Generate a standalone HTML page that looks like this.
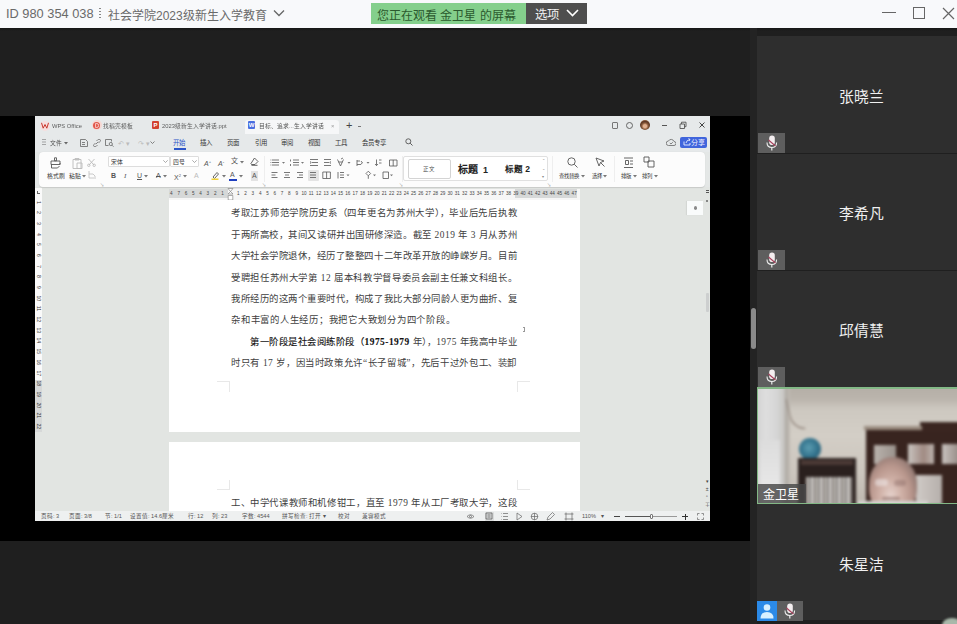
<!DOCTYPE html>
<html lang="zh-CN"><head><meta charset="utf-8">
<style>
*{margin:0;padding:0;box-sizing:border-box}
html,body{width:957px;height:624px;overflow:hidden;background:#1f1f1f;font-family:"Liberation Sans",sans-serif}
.a{position:absolute}
#title{left:0;top:0;width:957px;height:28px;background:#f8f9fb}
.tt{color:#6a6a6a;font-size:13px;white-space:nowrap}
#share{left:0;top:116px;width:750px;height:425px;background:#000}
#gap{left:750px;top:28px;width:7px;height:596px;background:#232323}
.tile{left:757px;width:200px;background:#2e2e2e}
.name{color:#f0f0f0;font-size:14.8px;white-space:nowrap}
.mic{left:758px;width:27px;height:20px;background:#5e5e5e}
.mic svg{position:absolute;left:0;top:0}
#wps{left:35px;top:116px;width:675px;height:405px;background:#e4e7e6;overflow:hidden}
.w7{font-size:5.8px;white-space:nowrap;line-height:10px;opacity:0.85}
.w75{font-size:6.4px;white-space:nowrap;line-height:10px;color:#333}
.w6{font-size:5.8px;white-space:nowrap;line-height:10px;color:#333}
.ic{font-size:7px;line-height:10px;color:#555;white-space:nowrap}
.sb{top:511px;font-size:5.6px;line-height:10px;color:#555;white-space:nowrap}
.doc{font-family:"Liberation Serif",serif;color:#404040;font-size:9.4px;letter-spacing:0.5px;line-height:14px;white-space:nowrap;text-align:justify}
</style></head><body>
<!-- title bar -->
<div id="title" class="a">
  <div class="a tt" style="left:6px;top:6px;font-size:12.8px">ID 980 354 038</div>
  <div class="a" style="left:99px;top:8px;width:1.5px;height:12px;background:repeating-linear-gradient(180deg,#888 0 1.5px,transparent 1.5px 3px)"></div>
  <div class="a tt" style="left:108px;top:6px;font-size:12px">社会学院2023级新生入学教育</div>
  <svg class="a" style="left:273px;top:9px" width="12" height="8" viewBox="0 0 12 8"><path d="M1 1.5 L6 6.5 L11 1.5" fill="none" stroke="#666" stroke-width="1.3"/></svg>
  <div class="a" style="left:371px;top:3px;width:155px;height:21px;background:#84cf8c"></div>
  <div class="a" style="left:377px;top:6px;color:#2b5a2e;font-size:12px;white-space:nowrap">您正在观看 金卫星 的屏幕</div>
  <div class="a" style="left:526px;top:3px;width:61px;height:21px;background:#4e4e4e"></div>
  <div class="a" style="left:535px;top:5px;color:#f0f0f0;font-size:12.4px">选项</div>
  <svg class="a" style="left:566px;top:9px" width="13" height="8" viewBox="0 0 13 8"><path d="M1 1 L6.5 6.5 L12 1" fill="none" stroke="#fff" stroke-width="1.6"/></svg>
  <div class="a" style="left:882px;top:12px;width:14px;height:1.3px;background:#666"></div>
  <div class="a" style="left:913px;top:7px;width:12px;height:12px;border:1.2px solid #666"></div>
  <svg class="a" style="left:942px;top:7px" width="13" height="13" viewBox="0 0 13 13"><path d="M1 1 L12 12 M12 1 L1 12" stroke="#666" stroke-width="1.2"/></svg>
</div>

<div class="a" style="left:0;top:28px;width:957px;height:3px;background:linear-gradient(#161616,#1f1f1f)"></div>
<div id="share" class="a"></div>
<div id="gap" class="a"></div>
<div class="a" style="left:751px;top:308px;width:5px;height:41px;background:#8a8a8a;border-radius:2.5px"></div>

<!-- participants -->
<div class="a tile" style="top:36px;height:117px"></div>
<div class="a tile" style="top:154px;height:116px"></div>
<div class="a tile" style="top:271px;height:116px"></div>
<div class="a tile" style="top:504px;height:116px"></div>
<div class="a name" style="left:839px;top:84.5px">张晓兰</div>
<div class="a name" style="left:839px;top:201.5px">李希凡</div>
<div class="a name" style="left:839px;top:319px">邱倩慧</div>
<div class="a name" style="left:839px;top:553px">朱星洁</div>
<div class="a mic" style="top:133px"><svg width="27" height="20" viewBox="0 0 27 20"><rect x="11.2" y="2.5" width="5.6" height="9.5" rx="2.8" fill="#f4eef0"/><path d="M9 9.5 q0 5 4.8 5 q4.8 0 4.8 -5" fill="none" stroke="#eee" stroke-width="1.1"/><path d="M13.8 14.5 v3" stroke="#eee" stroke-width="1.2"/><path d="M10.5 7 L17.5 13" stroke="#a8405c" stroke-width="1.1"/></svg></div>
<div class="a mic" style="top:250px"><svg width="27" height="20" viewBox="0 0 27 20"><rect x="11.2" y="2.5" width="5.6" height="9.5" rx="2.8" fill="#f4eef0"/><path d="M9 9.5 q0 5 4.8 5 q4.8 0 4.8 -5" fill="none" stroke="#eee" stroke-width="1.1"/><path d="M13.8 14.5 v3" stroke="#eee" stroke-width="1.2"/><path d="M10.5 7 L17.5 13" stroke="#a8405c" stroke-width="1.1"/></svg></div>
<div class="a mic" style="top:367px"><svg width="27" height="20" viewBox="0 0 27 20"><rect x="11.2" y="2.5" width="5.6" height="9.5" rx="2.8" fill="#f4eef0"/><path d="M9 9.5 q0 5 4.8 5 q4.8 0 4.8 -5" fill="none" stroke="#eee" stroke-width="1.1"/><path d="M13.8 14.5 v3" stroke="#eee" stroke-width="1.2"/><path d="M10.5 7 L17.5 13" stroke="#a8405c" stroke-width="1.1"/></svg></div>
<div class="a" style="left:757px;top:601px;width:20px;height:20px;background:#2b8ae8"><svg width="20" height="20" viewBox="0 0 20 20" style="position:absolute;left:0;top:0"><circle cx="10" cy="6.5" r="3.3" fill="#d8f0ff"/><path d="M3.5 17.5 q0 -6.5 6.5 -6.5 q6.5 0 6.5 6.5z" fill="#d8f0ff"/></svg></div>
<div class="a mic" style="left:777px;top:601px;width:26px"><svg width="26" height="20" viewBox="0 0 26 20"><rect x="10.2" y="2.5" width="5.6" height="9.5" rx="2.8" fill="#f4eef0"/><path d="M8 9.5 q0 5 4.8 5 q4.8 0 4.8 -5" fill="none" stroke="#eee" stroke-width="1.1"/><path d="M12.8 14.5 v3" stroke="#eee" stroke-width="1.2"/><path d="M9.5 7 L16.5 13" stroke="#a8405c" stroke-width="1.1"/></svg></div>

<!-- video tile -->
<div class="a" style="left:757px;top:387px;width:200px;height:117px;background:#83b886"></div>
<div class="a" style="left:758px;top:388.5px;width:199px;height:114.5px;overflow:hidden;background:#c9c3bb">
 <div class="a" style="left:-4px;top:-4px;width:207px;height:123px;filter:blur(1.8px)">
  <div class="a" style="left:0;top:0;width:207px;height:123px;background:linear-gradient(180deg,#b4aea6 0,#bab4ac 14px,#cdc8c0 24px,#d3cec6 50px,#cbc5bd 90px,#bcb5ad 123px)"></div>
  <div class="a" style="left:0;top:0;width:32px;height:123px;background:linear-gradient(90deg,#cdcdcd,#dedede 35%,#d6d6d6 70%,#c4c2be)"></div>
  <div class="a" style="left:6px;top:55px;width:20px;height:68px;background:linear-gradient(180deg,#dcdcdc,#ececec)"></div>
  <div class="a" style="left:31px;top:0;width:5px;height:123px;background:linear-gradient(90deg,#aaa59f,#c2bdb6)"></div>
  <div class="a" style="left:35px;top:14px;width:13px;height:30px;border-left:1.6px solid #7d6e64;border-bottom:1.6px solid #7d6e64;border-radius:0 0 0 12px;transform:skewX(14deg)"></div>
  <div class="a" style="left:45px;top:53px;width:22px;height:22px;border-radius:50%;background:radial-gradient(circle at 45% 45%,#5b9cb0,#30708a 55%,#274c5c)"></div>
  <div class="a" style="left:44px;top:73px;width:58px;height:50px;background:#2a201e"></div>
  <div class="a" style="left:47px;top:75px;width:52px;height:5px;background:#4b3a36"></div>
  <div class="a" style="left:52px;top:92px;width:46px;height:31px;background:repeating-linear-gradient(90deg,#b8b3ae 0 3px,#86827f 3px 5px,#cfcbc7 5px 8px,#55504d 8px 9px)"></div>
  <div class="a" style="left:112px;top:43px;width:95px;height:80px;background:#38241f"></div>
  <div class="a" style="left:166px;top:37px;width:41px;height:10px;background:#3a2520"></div>
  <div class="a" style="left:110px;top:41px;width:58px;height:4px;background:#9a8c80"></div>
  <div class="a" style="left:120px;top:60px;width:22px;height:19px;background:linear-gradient(90deg,#b9b2ac,#9a928c)"></div>
  <div class="a" style="left:154px;top:59px;width:26px;height:20px;background:linear-gradient(90deg,#c9c4c0,#a08a82 60%,#bdb4af)"></div>
  <div class="a" style="left:188px;top:59px;width:19px;height:20px;background:linear-gradient(90deg,#c9c3bf,#908580)"></div>
  <div class="a" style="left:162px;top:90px;width:26px;height:30px;background:linear-gradient(90deg,#cfcac6,#b5afab)"></div>
  <div class="a" style="left:115px;top:72px;width:48px;height:56px;border-radius:48% 48% 42% 42%;background:radial-gradient(ellipse at 45% 70%,#e6d2cc 0,#cfb0a6 30%,#b8968c 55%,#8e7670 78%,#6a5a56 100%)"></div><div class="a" style="left:121px;top:94px;width:13px;height:7px;background:rgba(240,235,235,0.55);border-radius:3px"></div><div class="a" style="left:140px;top:95px;width:12px;height:6px;background:rgba(120,90,85,0.35);border-radius:3px"></div><div class="a" style="left:128px;top:112px;width:18px;height:3px;background:rgba(110,80,75,0.45);border-radius:2px"></div>
  
  <div class="a" style="left:104px;top:116px;width:70px;height:8px;background:#d6d4d2"></div>
 </div>
</div>
<div class="a" style="left:758px;top:484px;width:48px;height:19px;background:rgba(72,72,72,0.82)"></div>
<div class="a" style="left:763px;top:486.5px;color:#fff;font-size:12px;line-height:16px;white-space:nowrap">金卫星</div>

<!-- WPS window -->
<div id="wps" class="a"></div>
<!-- tab row + menu row -->
<div class="a" style="left:35px;top:116px;width:675px;height:36px;background:#e6e9ea"></div>
<div class="a" style="left:40px;top:120.5px;width:10px;height:10px;border-radius:50%;background:#f6dede"></div><svg class="a" style="left:41px;top:122px" width="8" height="7" viewBox="0 0 8 7"><path d="M0.5 0.8 L2.2 6.2 L4 2.5 L5.8 6.2 L7.5 0.8" fill="none" stroke="#c8372d" stroke-width="1"/></svg>
<div class="a w7" style="left:52px;top:121px;color:#444">WPS Office</div>
<div class="a" style="left:91.5px;top:120px;width:10px;height:10px;border-radius:50%;background:#f6d8d4"></div><div class="a" style="left:93px;top:121.5px;width:7px;height:7px;border-radius:50%;background:#e2574a"></div><svg class="a" style="left:94.5px;top:122.5px" width="4" height="5" viewBox="0 0 4 5"><path d="M0.6 0.5 h1.2 a1.8 2 0 0 1 0 4 h-1.2z" fill="none" stroke="#fbe5e2" stroke-width="0.8"/></svg>
<div class="a w7" style="left:103px;top:121px;color:#444">找稻壳模板</div>
<div class="a" style="left:152px;top:121px;width:7px;height:8px;border-radius:1px;background:#d2412f;color:#fff;font-size:6px;line-height:8px;text-align:center;font-weight:bold">P</div>
<div class="a w7" style="left:162px;top:121px;color:#444">2023级新生入学讲话.ppt</div>
<div class="a" style="left:245px;top:120px;width:94px;height:14px;background:#f6f7f8;border-radius:3px 3px 0 0"></div>
<div class="a" style="left:248px;top:121px;width:7px;height:8px;border-radius:1px;background:#4a6ee0;color:#fff;font-size:6px;line-height:8px;text-align:center;font-weight:bold">W</div>
<div class="a w7" style="left:259px;top:121px;color:#333">目标、追求...生入学讲话</div>
<div class="a w7" style="left:331px;top:121px;color:#888">×</div>
<div class="a" style="left:346px;top:119px;color:#444;font-size:11px">+</div>
<div class="a" style="left:358px;top:126px;width:2.5px;height:0.8px;background:#777"></div>
<div class="a" style="left:612px;top:122px;width:6px;height:7px;border:1px solid #777;border-radius:1px"></div>
<div class="a" style="left:626px;top:122px;width:7px;height:7px;border:1px solid #666;border-radius:50%"></div>
<div class="a" style="left:640px;top:120px;width:10px;height:10px;border-radius:50%;background:radial-gradient(circle at 50% 62%,#e0b090 0 20%,#8a5a3a 40%,#5a3524 60%,#b4784c 85%,#d8a070 100%)"></div>
<div class="a" style="left:662px;top:125px;width:5px;height:1px;background:#555"></div>
<svg class="a" style="left:679px;top:121px" width="8" height="8" viewBox="0 0 8 8" fill="none" stroke="#555" stroke-width="0.9"><path d="M1 3 h4.5 v4.5 h-4.5z M2.5 3 v-1.8 h4.5 v4.5 h-1.5"/></svg>
<svg class="a" style="left:699px;top:122px" width="6" height="6" viewBox="0 0 6 6"><path d="M0.5 0.5 L5.5 5.5 M5.5 0.5 L0.5 5.5" stroke="#444" stroke-width="1"/></svg>
<!-- menu row -->
<svg class="a" style="left:41.5px;top:139px" width="5" height="6" viewBox="0 0 5 6"><path d="M0 0.5 h4 M0 3 h4 M0 5.5 h4" stroke="#777" stroke-width="0.6"/></svg>
<div class="a w7" style="left:50px;top:138px;color:#333">文件</div>
<svg class="a" style="left:64px;top:142px" width="4" height="3" viewBox="0 0 4 3"><path d="M0 0 L4 0 L2 2.5Z" fill="#666"/></svg>
<svg class="a" style="left:79.5px;top:138.5px" width="8" height="8" viewBox="0 0 8 8" fill="none" stroke="#666" stroke-width="0.8"><path d="M0.5 0.5 h5 l2 2 v5 h-7z M2 3.5 h3 M2 5.5 h3"/></svg>
<svg class="a" style="left:92.5px;top:138.5px" width="8" height="8" viewBox="0 0 8 8" fill="none" stroke="#666" stroke-width="0.8"><path d="M3.5 2 l1.5 -1.5 a1.4 1.4 0 0 1 2 2 l-1.5 1.5 M4.5 6 l-1.5 1.5 a1.4 1.4 0 0 1 -2 -2 l1.5 -1.5 M2.8 5.2 l2.4 -2.4"/></svg>
<svg class="a" style="left:105px;top:138.5px" width="9" height="8" viewBox="0 0 9 8" fill="none" stroke="#666" stroke-width="0.8"><path d="M0.5 0.5 h6 v2 M0.5 0.5 v6 h3"/><circle cx="5.8" cy="5" r="1.6"/><path d="M7 6.2 l1.5 1.5"/></svg>
<div class="a" style="left:118px;top:140px;color:#bbb;font-size:7px">↶ ▾</div>
<div class="a" style="left:138px;top:140px;color:#bbb;font-size:7px">↷ ▾</div>
<svg class="a" style="left:150px;top:141px" width="5" height="3" viewBox="0 0 5 3"><path d="M0.5 0.5 L2.5 2.5 L4.5 0.5" fill="none" stroke="#666" stroke-width="0.8"/></svg>
<div class="a w75" style="left:173px;top:138px;color:#2c55c8">开始</div>
<div class="a" style="left:174px;top:148px;width:12px;height:1.5px;background:#2c55c8"></div>
<div class="a w75" style="left:200px;top:138px">插入</div>
<div class="a w75" style="left:227px;top:138px">页面</div>
<div class="a w75" style="left:255px;top:138px">引用</div>
<div class="a w75" style="left:281px;top:138px">审阅</div>
<div class="a w75" style="left:308px;top:138px">视图</div>
<div class="a w75" style="left:335px;top:138px">工具</div>
<div class="a w75" style="left:362px;top:138px">会员专享</div>
<svg class="a" style="left:405px;top:138px" width="8" height="8" viewBox="0 0 8 8"><circle cx="3.3" cy="3.3" r="2.5" fill="none" stroke="#555" stroke-width="0.9"/><path d="M5.2 5.2 L7.5 7.5" stroke="#555" stroke-width="1"/></svg>
<svg class="a" style="left:666px;top:138px" width="10" height="9" viewBox="0 0 10 9" fill="none" stroke="#666" stroke-width="0.8"><path d="M2.5 7.5 h5.5 a2 2 0 0 0 0 -4 a3 3 0 0 0 -5.5 -0.5 a2.2 2.2 0 0 0 0 4.5z M3.8 5 l1.2 1 l1.8 -1.8"/></svg>
<div class="a" style="left:680px;top:137px;width:27px;height:11px;background:#4065dc;border-radius:2px"></div>
<svg class="a" style="left:683px;top:138px" width="8" height="8" viewBox="0 0 8 8" fill="none" stroke="#e8eeff" stroke-width="0.9"><path d="M1 3.5 v3.5 h6 v-2 M3 5 q0.5 -3 4 -3.5 M5.5 0.5 l1.5 1 l-1 1.5"/></svg>
<div class="a" style="left:691px;top:137px;color:#eef;font-size:7px;line-height:11px">分享</div>
<!-- document area -->
<div class="a" style="left:35px;top:187px;width:675px;height:334px;background:#e2e5e2"></div>
<div class="a" style="left:35px;top:188px;width:7px;height:192px;background:#fafafa"></div><div class="a" style="left:35px;top:380px;width:7px;height:52px;background:#d6d8d8"></div>
<div class="a" style="left:35px;top:188px;width:7px;height:244px;overflow:hidden;font-size:5.2px;color:#333;line-height:10.7px;text-align:center;padding-top:8.5px;white-space:nowrap"><div style="height:10.7px;transform:rotate(90deg)">1</div><div style="height:10.7px;transform:rotate(90deg)">2</div><div style="height:10.7px;transform:rotate(90deg)">3</div><div style="height:10.7px;transform:rotate(90deg)">4</div><div style="height:10.7px;transform:rotate(90deg)">5</div><div style="height:10.7px;transform:rotate(90deg)">6</div><div style="height:10.7px;transform:rotate(90deg)">7</div><div style="height:10.7px;transform:rotate(90deg)">8</div><div style="height:10.7px;transform:rotate(90deg)">9</div><div style="height:10.7px;transform:rotate(90deg)">10</div><div style="height:10.7px;transform:rotate(90deg)">11</div><div style="height:10.7px;transform:rotate(90deg)">12</div><div style="height:10.7px;transform:rotate(90deg)">13</div><div style="height:10.7px;transform:rotate(90deg)">14</div><div style="height:10.7px;transform:rotate(90deg)">15</div><div style="height:10.7px;transform:rotate(90deg)">16</div><div style="height:10.7px;transform:rotate(90deg)">17</div><div style="height:10.7px;transform:rotate(90deg)">18</div><div style="height:10.7px;transform:rotate(90deg)">19</div><div style="height:10.7px;transform:rotate(90deg)">20</div><div style="height:10.7px;transform:rotate(90deg)">21</div><div style="height:10.7px;transform:rotate(90deg)">22</div><div style="height:10.7px;transform:rotate(90deg)">23</div></div><div class="a" style="left:37px;top:191px;width:3px;height:3px;border-left:0.7px solid #666;border-bottom:0.7px solid #666"></div>
<div class="a" style="left:169px;top:189px;width:411px;height:11px;background:#f6f6f6"></div>
<div class="a" style="left:169px;top:189px;width:59px;height:9px;background:#d6d8d8"></div>
<div class="a" style="left:515px;top:189px;width:62px;height:9px;background:#d6d8d8"></div>
<div class="a" id="rul" style="left:169px;top:189px;width:411px;height:9px;font-size:4.6px;color:#444;line-height:9px;white-space:nowrap"><span class="a" style="left:1.1px;top:0">4</span><span class="a" style="left:8.4px;top:0">7</span><span class="a" style="left:15.7px;top:0">6</span><span class="a" style="left:23.0px;top:0">5</span><span class="a" style="left:30.3px;top:0">4</span><span class="a" style="left:37.6px;top:0">3</span><span class="a" style="left:44.9px;top:0">2</span><span class="a" style="left:52.2px;top:0">1</span><span class="a" style="left:68.0px;top:0">1</span><span class="a" style="left:75.3px;top:0">2</span><span class="a" style="left:82.6px;top:0">3</span><span class="a" style="left:89.9px;top:0">4</span><span class="a" style="left:97.2px;top:0">5</span><span class="a" style="left:104.5px;top:0">6</span><span class="a" style="left:111.8px;top:0">7</span><span class="a" style="left:119.1px;top:0">8</span><span class="a" style="left:126.4px;top:0">9</span><span class="a" style="left:132.5px;top:0">10</span><span class="a" style="left:139.8px;top:0">11</span><span class="a" style="left:147.1px;top:0">12</span><span class="a" style="left:154.4px;top:0">13</span><span class="a" style="left:161.7px;top:0">14</span><span class="a" style="left:169.0px;top:0">15</span><span class="a" style="left:176.3px;top:0">16</span><span class="a" style="left:183.6px;top:0">17</span><span class="a" style="left:190.9px;top:0">18</span><span class="a" style="left:198.2px;top:0">19</span><span class="a" style="left:205.5px;top:0">20</span><span class="a" style="left:212.8px;top:0">21</span><span class="a" style="left:220.1px;top:0">22</span><span class="a" style="left:227.4px;top:0">23</span><span class="a" style="left:234.7px;top:0">24</span><span class="a" style="left:242.0px;top:0">25</span><span class="a" style="left:249.3px;top:0">26</span><span class="a" style="left:256.6px;top:0">27</span><span class="a" style="left:263.9px;top:0">28</span><span class="a" style="left:271.2px;top:0">29</span><span class="a" style="left:278.5px;top:0">30</span><span class="a" style="left:285.8px;top:0">31</span><span class="a" style="left:293.1px;top:0">32</span><span class="a" style="left:300.4px;top:0">33</span><span class="a" style="left:307.7px;top:0">34</span><span class="a" style="left:315.0px;top:0">35</span><span class="a" style="left:322.3px;top:0">36</span><span class="a" style="left:329.6px;top:0">37</span><span class="a" style="left:336.9px;top:0">38</span><span class="a" style="left:344.2px;top:0">39</span><span class="a" style="left:351.5px;top:0">40</span><span class="a" style="left:358.8px;top:0">41</span><span class="a" style="left:366.1px;top:0">42</span><span class="a" style="left:373.4px;top:0">43</span><span class="a" style="left:380.7px;top:0">44</span><span class="a" style="left:388.0px;top:0">45</span><span class="a" style="left:395.3px;top:0">46</span><span class="a" style="left:402.6px;top:0">47</span></div>
<svg class="a" style="left:227px;top:188px" width="7" height="13" viewBox="0 0 7 13" fill="#fff" stroke="#777" stroke-width="0.6"><path d="M1 0.5 h5 l-2.5 3z M1 6 l2.5 -2.5 l2.5 2.5z M1.2 7.5 h4.6 v4.5 h-4.6z"/></svg>
<div class="a" style="left:169px;top:200px;width:411px;height:232px;background:#fff"></div>
<div class="a" style="left:169px;top:442px;width:411px;height:69px;background:#fff"></div>
<div class="a" style="left:217px;top:381px;width:13px;height:11px;border-top:0.7px solid #e8e8e8;border-right:0.7px solid #e8e8e8"></div>
<div class="a" style="left:517px;top:381px;width:13px;height:11px;border-top:0.7px solid #e8e8e8;border-left:0.7px solid #e8e8e8"></div>
<div class="a" style="left:217px;top:480px;width:13px;height:10px;border-bottom:0.7px solid #e8e8e8;border-right:0.7px solid #e8e8e8"></div>
<div class="a" style="left:517px;top:480px;width:13px;height:10px;border-bottom:0.7px solid #e8e8e8;border-left:0.7px solid #e8e8e8"></div>
<div class="a" style="left:687px;top:201px;width:16px;height:14px;background:#f9fbfb;box-shadow:-1px 0 1px rgba(0,0,0,0.06)"></div><div class="a" style="left:693.5px;top:206px;width:3px;height:3.5px;border-radius:50%;background:#8a8a8a"></div><div class="a" style="left:705.5px;top:190px;width:3px;height:3px;border-top:0.8px solid #555;border-bottom:0.8px solid #555"></div><div class="a" style="left:706px;top:200px;width:2px;height:2px;border-radius:50%;background:#666"></div>
<div class="a" style="left:705.5px;top:293px;width:3px;height:19px;background:#cdcfcf;border-radius:1px"></div>
<div class="a" style="left:704.5px;top:478px;font-size:5px;color:#444;line-height:7.5px;text-align:center">▾<br>±<br>▫<br>∓</div>
<div class="a doc" style="left:231px;top:206.3px;width:286px;text-align-last:justify">考取江苏师范学院历史系（四年更名为苏州大学），毕业后先后执教</div>
<div class="a doc" style="left:231px;top:227.7px;width:286px;text-align-last:justify">于两所高校，其间又读研并出国研修深造。截至 2019 年 3 月从苏州</div>
<div class="a doc" style="left:231px;top:249.2px;width:286px;text-align-last:justify">大学社会学院退休，经历了整整四十二年改革开放的峥嵘岁月。目前</div>
<div class="a doc" style="left:231px;top:270.6px;width:286px;text-align-last:justify">受聘担任苏州大学第 12 届本科教学督导委员会副主任兼文科组长。</div>
<div class="a doc" style="left:231px;top:292.0px;width:286px;text-align-last:justify">我所经历的这两个重要时代，构成了我比大部分同龄人更为曲折、复</div>
<div class="a doc" style="left:231px;top:313.4px;width:286px;text-align-last:left;letter-spacing:0.75px">杂和丰富的人生经历；我把它大致划分为四个阶段。</div>
<div class="a doc" style="left:231px;top:334.9px;width:286px;text-align-last:justify"><span style="display:inline-block;width:19px"></span><span style="font-weight:normal;-webkit-text-stroke:0.12px #222;color:#111">第一阶段是社会阅练阶段（<b>1975-1979</b></span> 年），1975 年我高中毕业</div>
<div class="a doc" style="left:231px;top:356.3px;width:286px;text-align-last:justify">时只有 17 岁，因当时政策允许“长子留城”，先后干过外包工、装卸</div>
<div class="a doc" style="left:231px;top:495.9px;width:286px;text-align-last:justify">工、中学代课教师和机修钳工，直至 1979 年从工厂考取大学，这段</div>
<div class="a" style="left:523px;top:327px;width:2px;height:5px;border-top:0.6px solid #999;border-bottom:0.6px solid #999"></div><div class="a" style="left:523.6px;top:327px;width:0.7px;height:5px;background:#999"></div>
<!-- status bar -->
<div class="a" style="left:35px;top:511px;width:675px;height:10px;background:#eef0f0"></div>
<div class="a sb" style="left:41px">页码: 3</div>
<div class="a sb" style="left:69px">页面: 3/8</div>
<div class="a sb" style="left:105px">节: 1/1</div>
<div class="a sb" style="left:130px">设置值: 14.6厘米</div>
<div class="a sb" style="left:188px">行: 12</div>
<div class="a sb" style="left:212px">列: 23</div>
<div class="a sb" style="left:242px">字数: 4544</div>
<div class="a sb" style="left:282px">拼写检查: 打开 ▾</div>
<div class="a sb" style="left:338px">校对</div>
<div class="a sb" style="left:362px">兼容模式</div>
<svg class="a" style="left:466px;top:512px" width="120" height="9" viewBox="0 0 120 9" fill="none" stroke="#666" stroke-width="0.7">
<path d="M1 4.5 q3.5 -3.5 7 0 q-3.5 3.5 -7 0z"/><circle cx="4.5" cy="4.5" r="1"/>

<path d="M37 1.5 h5 M37 4.5 h5 M37 7.5 h5 M35.5 1.5 h0.5 M35.5 4.5 h0.5 M35.5 7.5 h0.5"/>
<path d="M51 1 l5 3.5 l-5 3.5z"/>
<circle cx="68.5" cy="4.5" r="3.3"/><path d="M65 4.5 h7 M68.5 1 v7"/>
<path d="M81 8 l1 -3 l4.5 -4.5 l2 2 l-4.5 4.5z"/>
<path d="M100 0.5 v8 M106 0.5 v8 M98.5 2 h9 M98.5 7 h9"/>
</svg>
<div class="a" style="left:484.5px;top:511.5px;width:9px;height:9px;background:#d9dbdb;border-radius:1px"></div>
<svg class="a" style="left:485px;top:512px" width="8" height="8" viewBox="0 0 8 8" fill="none" stroke="#555" stroke-width="0.7"><path d="M1 1 h6 v6 h-6z M2.5 3 h3 M2.5 5 h3"/></svg>
<div class="a sb" style="left:582px">110%</div>
<div class="a sb" style="left:601px">▾</div>
<div class="a" style="left:614px;top:516px;width:6px;height:1px;background:#444"></div>
<div class="a" style="left:625px;top:516px;width:26px;height:1px;background:#555"></div>
<div class="a" style="left:651px;top:516.3px;width:26px;height:0.6px;background:#999"></div>
<div class="a" style="left:650px;top:514px;width:3px;height:5px;background:#fff;border:0.6px solid #777;border-radius:1px"></div>
<div class="a" style="left:682px;top:516px;width:6px;height:1px;background:#333"></div>
<div class="a" style="left:684.5px;top:513.5px;width:1px;height:6px;background:#333"></div>
<svg class="a" style="left:697px;top:513px" width="7" height="7" viewBox="0 0 7 7" fill="none" stroke="#666" stroke-width="0.7"><path d="M0.5 2.5 v-2 h2 M4.5 0.5 h2 v2 M6.5 4.5 v2 h-2 M2.5 6.5 h-2 v-2"/></svg>
<!-- ribbon -->
<div class="a" style="left:39px;top:152px;width:666px;height:35px;background:#fcfcfc;border-radius:4px;box-shadow:0 0.5px 1px rgba(0,0,0,0.12)"></div>
<svg class="a" style="left:49px;top:157px" width="13" height="12" viewBox="0 0 13 12" fill="none" stroke="#555" stroke-width="0.9"><path d="M5.5 0.8 h2 v3 h-2z M2 4 h9 v3.5 h-9z M2.5 7.5 v3.5 h6 l2 -2 M11 6 v1.5"/></svg>
<div class="a w6" style="left:47px;top:171px">格式刷</div>
<svg class="a" style="left:71px;top:157px" width="12" height="12" viewBox="0 0 12 12" fill="none" stroke="#bbb" stroke-width="0.9"><path d="M4 1.5 h4 v1.5 h-4z M2 2.5 h8 v9 h-8z M6 6 h5 v5.5 h-5z"/></svg>
<div class="a w6" style="left:69px;top:171px">粘贴</div>
<svg class="a" style="left:82px;top:175px" width="4" height="3" viewBox="0 0 4 3"><path d="M0 0 L4 0 L2 2.5Z" fill="#777"/></svg>
<svg class="a" style="left:87px;top:158px" width="9" height="9" viewBox="0 0 9 9" fill="none" stroke="#bbb" stroke-width="0.9"><path d="M1.5 1 L7 7 M7.5 1 L2 7"/><circle cx="1.8" cy="7.3" r="1.2"/><circle cx="7.2" cy="7.3" r="1.2"/></svg>
<svg class="a" style="left:87px;top:170px" width="9" height="10" viewBox="0 0 9 10" fill="none" stroke="#c4c4c4" stroke-width="0.9"><path d="M2 1 v7 h5 M2 4 h4 l2 2 v3"/></svg>
<div class="a" style="left:100px;top:182px;color:#888;font-size:4px">↘</div>
<!-- font boxes -->
<div class="a" style="left:108px;top:156px;width:62px;height:11px;border:0.8px solid #ddd;border-radius:1px;background:#fff"></div>
<div class="a w6" style="left:111px;top:157px;color:#333;font-family:'Liberation Serif',serif">宋体</div>
<svg class="a" style="left:163px;top:160px" width="5" height="3" viewBox="0 0 5 3"><path d="M0.3 0.3 L2.5 2.5 L4.7 0.3" fill="none" stroke="#888" stroke-width="0.7"/></svg>
<div class="a" style="left:170px;top:156px;width:29px;height:11px;border:0.8px solid #ddd;border-radius:1px;background:#fff"></div>
<div class="a w6" style="left:173px;top:157px;color:#333">四号</div>
<svg class="a" style="left:192px;top:160px" width="5" height="3" viewBox="0 0 5 3"><path d="M0.3 0.3 L2.5 2.5 L4.7 0.3" fill="none" stroke="#888" stroke-width="0.7"/></svg>
<div class="a ic" style="left:204px;top:157px;font-style:italic">A<sup style="font-size:4px">+</sup></div>
<div class="a ic" style="left:218px;top:157px;font-style:italic">A<sup style="font-size:4px">-</sup></div>
<div class="a ic" style="left:231px;top:156px;font-size:7px">文</div>
<svg class="a" style="left:240px;top:161px" width="4" height="3" viewBox="0 0 4 3"><path d="M0 0 L4 0 L2 2.5Z" fill="#777"/></svg>
<svg class="a" style="left:250px;top:157px" width="9" height="9" viewBox="0 0 9 9" fill="none" stroke="#555" stroke-width="0.9"><path d="M4.5 1 L8 4.5 L5 7.5 L1.5 7.5 L0.8 6.8 Z M1.5 8.3 h6"/></svg>
<!-- row 2 font -->
<div class="a ic" style="left:111px;top:171px;font-weight:bold">B</div>
<div class="a ic" style="left:124px;top:171px;font-style:italic;font-family:'Liberation Serif',serif">I</div>
<div class="a ic" style="left:137px;top:171px;text-decoration:underline">U</div>
<svg class="a" style="left:144px;top:175px" width="4" height="3" viewBox="0 0 4 3"><path d="M0 0 L4 0 L2 2.5Z" fill="#777"/></svg>
<div class="a ic" style="left:156px;top:171px;text-decoration:line-through">A</div>
<svg class="a" style="left:163px;top:175px" width="4" height="3" viewBox="0 0 4 3"><path d="M0 0 L4 0 L2 2.5Z" fill="#777"/></svg>
<div class="a ic" style="left:174px;top:171px">X<sup style="font-size:4px">2</sup></div>
<svg class="a" style="left:183px;top:175px" width="4" height="3" viewBox="0 0 4 3"><path d="M0 0 L4 0 L2 2.5Z" fill="#777"/></svg>
<div class="a ic" style="left:194px;top:171px;color:#bbb">A</div>
<svg class="a" style="left:211px;top:171px" width="9" height="9" viewBox="0 0 9 9" fill="none" stroke="#555" stroke-width="0.9"><path d="M2 6 L6 1.5 L7.5 3 L3.5 7.5z"/><path d="M0.5 8.3 h7" stroke="#f2d23a" stroke-width="1.6"/></svg>
<svg class="a" style="left:222px;top:175px" width="4" height="3" viewBox="0 0 4 3"><path d="M0 0 L4 0 L2 2.5Z" fill="#777"/></svg>
<div class="a ic" style="left:230px;top:170px">A</div>
<div class="a" style="left:229px;top:179px;width:8px;height:1.5px;background:#1f3fbf"></div>
<svg class="a" style="left:239px;top:175px" width="4" height="3" viewBox="0 0 4 3"><path d="M0 0 L4 0 L2 2.5Z" fill="#777"/></svg>
<div class="a ic" style="left:251px;top:171px;background:#e3e3e3;padding:0 1px">A</div>
<div class="a" style="left:262px;top:182px;color:#888;font-size:4px">↘</div>
<div class="a" style="left:264px;top:156px;width:1px;height:26px;background:#eeeeee"></div>
<!-- paragraph -->
<div class="a" style="left:308px;top:170px;width:10.5px;height:10.5px;background:#e4e4e4;border-radius:1px"></div>
<svg class="a" style="left:265px;top:152px" width="140" height="35" viewBox="0 0 140 35" fill="none" stroke="#555" stroke-width="0.8">
<path d="M7 8 h7 M7 10.5 h7 M7 13 h7 M5.5 8 h0.8 M5.5 10.5 h0.8 M5.5 13 h0.8"/>
<path d="M28 8 h6 M28 10.5 h6 M28 13 h6 M25.5 7.5 v2 M25.5 12 v2"/>
<path d="M45 7.5 h8 M47 10.5 h6 M45 13.5 h8 M45 9.5 l1.3 1 l-1.3 1"/>
<path d="M59 7.5 h7 M59 10.5 h5 M59 13.5 h7 M66 9.5 l-1.3 1 l1.3 1"/>
<path d="M72.5 7.5 l3 6.5 l3 -6.5 M73.5 10 h4 M76 7 l2 -1"/>
<path d="M92 8 v6 M92 9 h3 M92 12.5 h4 M96 9 l1.5 2 l-1.5 1"/>
<path d="M111.5 7.5 v6 M110 12 l1.5 1.6 l1.5 -1.6 M114 8 h2.5 M114 11 h2.5"/>
<path d="M124.5 8 h7.5 v6 h-7.5z M128.2 8 v6"/>
<path d="M6.5 20.5 h6 M6.5 23 h4 M6.5 25.5 h6"/>
<path d="M19 20.5 h6 M20 23 h4 M19 25.5 h6"/>
<path d="M32 20.5 h6 M34 23 h4 M32 25.5 h6"/>
<path d="M45 20.5 h6 M45 23 h6 M45 25.5 h6"/>
<path d="M57.8 20 h7.6 v6.5 h-7.6z M61.6 20 v6.5"/>
<path d="M73 20 v6.5 M75 20.5 h4 M75 23 h4 M75 25.5 h4"/>
<path d="M101 21.5 l2.3 -2.3 l2.3 2.3 l-2.3 2.3z M103.3 23.8 v3"/>
<path d="M118 20 h5.5 v6.5 h-5.5z"/>
</svg>
<svg class="a" style="left:265px;top:152px" width="140" height="35" viewBox="0 0 140 35" fill="#777">
<path d="M17 10 h3 l-1.5 1.8z M36 10 h3 l-1.5 1.8z M82.5 10 h3 l-1.5 1.8z M101.5 10 h3 l-1.5 1.8z M81.5 22.5 h3 l-1.5 1.8z M108 22.5 h3 l-1.5 1.8z M125 22.5 h3 l-1.5 1.8z"/>
</svg>
<div class="a" style="left:399px;top:182px;color:#888;font-size:4px">↘</div>
<div class="a" style="left:402px;top:156px;width:1px;height:26px;background:#eeeeee"></div>
<!-- styles gallery -->
<div class="a" style="left:403px;top:156px;width:145px;height:25px;border:0.8px solid #e0e0e0;border-radius:2px;background:#fff"></div>
<div class="a" style="left:408px;top:158.5px;width:43px;height:20.5px;border:1.6px solid #d4d4d4;border-radius:2px;background:#fff"></div>
<div class="a" style="left:423px;top:165px;color:#555;font-size:5.5px;font-family:'Liberation Serif',serif">正文</div>
<div class="a" style="left:458px;top:161px;color:#222;font-size:10px;font-weight:bold;font-family:'Liberation Serif',serif;white-space:nowrap">标题&nbsp;&nbsp;<b style="font-family:'Liberation Sans',sans-serif;font-size:9px">1</b></div>
<div class="a" style="left:505px;top:162px;color:#222;font-size:8.5px;font-weight:bold;white-space:nowrap">标题&nbsp;2</div>
<div class="a" style="left:542px;top:157px;color:#888;font-size:4px;line-height:8px">⌃<br>⌄<br>▾</div>
<div class="a" style="left:547px;top:182px;color:#888;font-size:4px">↘</div>
<div class="a" style="left:552px;top:156px;width:1px;height:26px;background:#eeeeee"></div>
<svg class="a" style="left:567px;top:157px" width="11" height="11" viewBox="0 0 11 11" fill="none" stroke="#555" stroke-width="0.9"><circle cx="4.5" cy="4.5" r="3.7"/><path d="M7.3 7.3 L10.5 10.5"/></svg>
<div class="a w6" style="left:559px;top:171px;font-size:5.4px">查找替换</div>
<svg class="a" style="left:581px;top:175px" width="4" height="3" viewBox="0 0 4 3"><path d="M0 0 L4 0 L2 2.5Z" fill="#777"/></svg>
<svg class="a" style="left:595px;top:157px" width="11" height="11" viewBox="0 0 11 11" fill="none" stroke="#555" stroke-width="0.9"><path d="M1 1 L9 4 L5.5 5.5 L4 9 Z M5.5 5.5 L9.5 9.5"/></svg>
<div class="a w6" style="left:592px;top:171px;font-size:5.4px">选择</div>
<svg class="a" style="left:603px;top:175px" width="4" height="3" viewBox="0 0 4 3"><path d="M0 0 L4 0 L2 2.5Z" fill="#777"/></svg>
<div class="a" style="left:614px;top:156px;width:1px;height:26px;background:#eeeeee"></div>
<svg class="a" style="left:623px;top:157px" width="11" height="11" viewBox="0 0 11 11" fill="none" stroke="#555" stroke-width="0.9"><path d="M1 1 h9 M1 10.5 h9 M2.5 3.5 h3 v4 h-3z M7 4 h3 M7 7 h3"/></svg>
<div class="a w6" style="left:621px;top:171px;font-size:5.4px">排版</div>
<svg class="a" style="left:633px;top:175px" width="4" height="3" viewBox="0 0 4 3"><path d="M0 0 L4 0 L2 2.5Z" fill="#777"/></svg>
<svg class="a" style="left:643px;top:156px" width="12" height="12" viewBox="0 0 12 12" fill="none" stroke="#555" stroke-width="0.9"><path d="M1 1 h5 v5 h-5z M5 5 h6 v6 h-6z"/></svg>
<div class="a w6" style="left:642px;top:171px;font-size:5.4px">排列</div>
<svg class="a" style="left:654px;top:175px" width="4" height="3" viewBox="0 0 4 3"><path d="M0 0 L4 0 L2 2.5Z" fill="#777"/></svg>
<div class="a" style="left:942px;top:618px;width:20px;height:14px;border-radius:50%;background:#a9b8aa;filter:blur(1px)"></div>
</body></html>
